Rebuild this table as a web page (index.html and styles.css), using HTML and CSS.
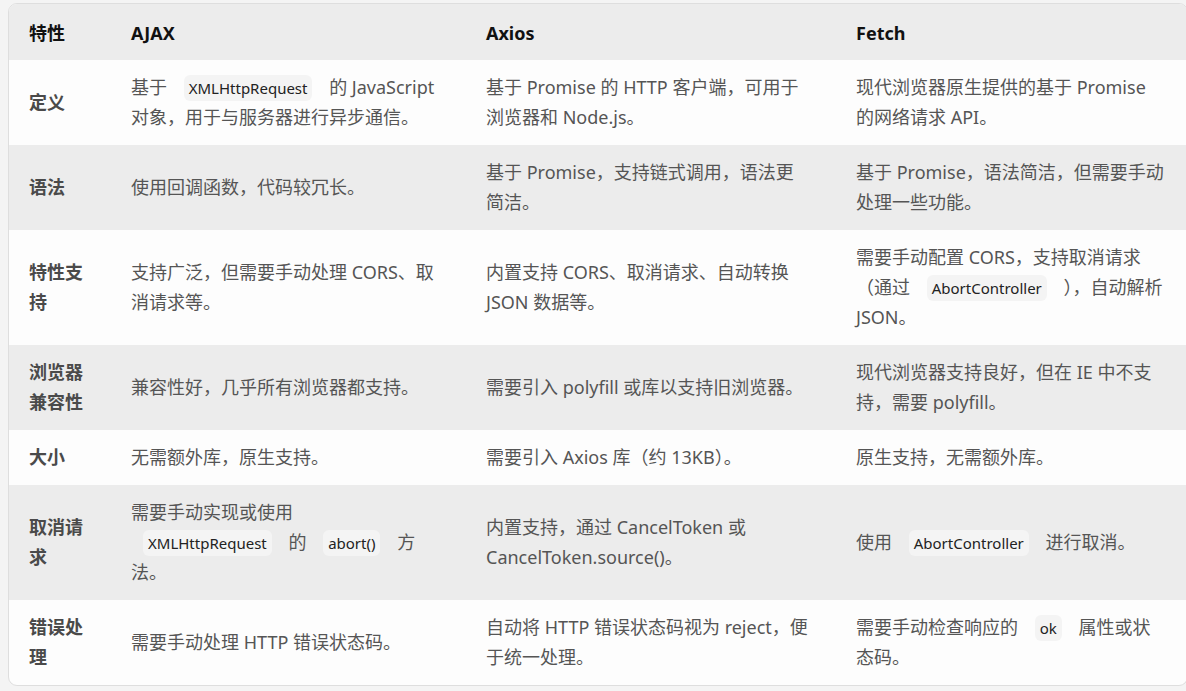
FILE: index.html
```html
<!DOCTYPE html>
<html lang="zh-CN">
<head>
<meta charset="utf-8">
<title>AJAX vs Axios vs Fetch</title>
<link rel="stylesheet" href="styles.css">
</head>
<body>
<div class="wrap">
<table class="cmp">
<colgroup>
<col class="c1"><col class="c2"><col class="c3"><col class="c4">
</colgroup>
<thead>
<tr><th>特性</th><th>AJAX</th><th>Axios</th><th>Fetch</th></tr>
</thead>
<tbody>
<tr>
<td class="k">定义</td>
<td>基于 <code>XMLHttpRequest</code> 的 JavaScript 对象，用于与服务器进行异步通信。</td>
<td>基于 Promise 的 HTTP 客户端，可用于浏览器和 Node.js。</td>
<td>现代浏览器原生提供的基于 Promise 的网络请求 API。</td>
</tr>
<tr>
<td class="k">语法</td>
<td>使用回调函数，代码较冗长。</td>
<td>基于 Promise，支持链式调用，语法更简洁。</td>
<td>基于 Promise，语法简洁，但需要手动处理一些功能。</td>
</tr>
<tr>
<td class="k">特性支持</td>
<td>支持广泛，但需要手动处理 CORS、取消请求等。</td>
<td>内置支持 CORS、取消请求、自动转换 JSON 数据等。</td>
<td>需要手动配置 CORS，支持取消请求（通过 <code>AbortController</code> ），自动解析 JSON。</td>
</tr>
<tr>
<td class="k">浏览器兼容性</td>
<td>兼容性好，几乎所有浏览器都支持。</td>
<td>需要引入 polyfill 或库以支持旧浏览器。</td>
<td>现代浏览器支持良好，但在 IE 中不支持，需要 polyfill。</td>
</tr>
<tr>
<td class="k">大小</td>
<td>无需额外库，原生支持。</td>
<td>需要引入 Axios 库（约 13KB）。</td>
<td>原生支持，无需额外库。</td>
</tr>
<tr>
<td class="k">取消请求</td>
<td>需要手动实现或使用 <code>XMLHttpRequest</code> 的 <code>abort()</code> 方法。</td>
<td>内置支持，通过 CancelToken 或 CancelToken.source()。</td>
<td>使用 <code>AbortController</code> 进行取消。</td>
</tr>
<tr>
<td class="k">错误处理</td>
<td>需要手动处理 HTTP 错误状态码。</td>
<td>自动将 HTTP 错误状态码视为 reject，便于统一处理。</td>
<td>需要手动检查响应的 <code>ok</code> 属性或状态码。</td>
</tr>
</tbody>
</table>
</div>
</body>
</html>
```
FILE: styles.css
```css
html, body {
  margin: 0;
  padding: 0;
  background: #f4f4f4;
}
body {
  padding: 3px 0 0 8px;
  overflow: hidden;
  font-family: "Noto Sans", "Noto Sans CJK SC", sans-serif;
}
.wrap {
  width: 1178px;
  border: 1px solid #dedede;
  border-radius: 9px;
  overflow: hidden;
  background: #fdfdfd;
}
.cmp {
  width: 100%;
  border-collapse: collapse;
  table-layout: fixed;
  font-size: 18px;
  line-height: 30px;
}
.c1 { width: 102px; }
.c2 { width: 355px; }
.c3 { width: 370px; }
.c4 { width: auto; }
.cmp th {
  text-align: left;
  font-weight: 700;
  color: #111;
  background: #ececec;
  padding: 14px 20px 12px 20px;
  vertical-align: middle;
}
.cmp td {
  color: #555;
  padding: 12px 20px 13px 20px;
  vertical-align: middle;
}
.cmp td:nth-child(3) {
  padding-right: 26px;
}
.cmp td.k {
  font-weight: 700;
  color: #4a4a4a;
}
.cmp tbody tr:nth-child(even) td {
  background: #ececec;
}
code {
  font-family: "Noto Sans", "Noto Sans CJK SC", sans-serif;
  font-size: 15px;
  line-height: 20px;
  color: #222;
  background: #f4f4f4;
  border-radius: 6px;
  padding: 3px 5px;
  margin: 0 12px;
}
```
